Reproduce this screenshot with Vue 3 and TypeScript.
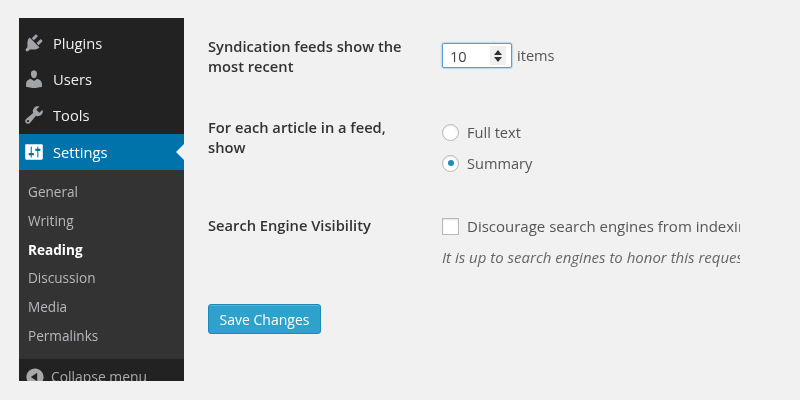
<script setup lang="ts">
const topItems = [
  {
    label: 'Plugins',
    d: 'M13.11 4.36L9.87 7.6 8 5.73l3.24-3.24c.35-.34 1.05-.2 1.56.32.52.51.66 1.21.31 1.55zm-8 1.77l.91-1.12 9.01 9.01-1.19.84c-.71.71-2.63 1.16-3.82 1.16H6.14L4.9 17.26c-.59.59-1.54.59-2.12 0-.59-.58-.59-1.53 0-2.12l1.24-1.24v-3.88c0-1.13.4-3.19 1.09-3.89zm7.26 3.97l3.24-3.24c.34-.35 1.04-.21 1.55.31.52.51.66 1.21.31 1.55l-3.24 3.25z',
  },
  {
    label: 'Users',
    d: 'M10 9.25c-2.27 0-2.73-3.44-2.73-3.44C7 4.02 7.82 2 9.97 2c2.16 0 2.98 2.02 2.71 3.81 0 0-.41 3.44-2.68 3.44zm0 2.57L12.72 10c2.39 0 4.52 2.33 4.52 4.53v2.49s-3.65 1.13-7.24 1.13c-3.65 0-7.24-1.13-7.24-1.13v-2.49c0-2.25 1.94-4.48 4.47-4.48z',
  },
  {
    label: 'Tools',
    d: 'M16.68 9.77c-1.34 1.34-3.3 1.67-4.95.99l-5.41 6.52c-.99.99-2.59.99-3.58 0s-.99-2.59 0-3.57l6.52-5.42c-.68-1.65-.35-3.61.99-4.95 1.28-1.28 3.12-1.62 4.72-1.06l-2.89 2.89 2.82 2.82 2.86-2.87c.53 1.58.18 3.39-1.08 4.65zM3.81 16.21c.4.39 1.04.39 1.43 0 .4-.4.4-1.04 0-1.43-.39-.4-1.03-.4-1.43 0-.39.39-.39 1.03 0 1.43z',
  },
];
const subItems = ['General', 'Writing', 'Reading', 'Discussion', 'Media', 'Permalinks'];
</script>

<template>
  <div class="page">
    <aside class="sidebar">
      <nav class="menu">
        <div v-for="item in topItems" :key="item.label" class="menu-item">
          <svg class="icon" viewBox="0 0 20 20" aria-hidden="true"><path :d="item.d" /></svg>
          <span>{{ item.label }}</span>
        </div>
        <div class="menu-item current">
          <svg class="icon" viewBox="0 0 20 20" aria-hidden="true">
            <path d="M18 16V4c0-.55-.45-1-1-1H3c-.55 0-1 .45-1 1v12c0 .55.45 1 1 1h14c.55 0 1-.45 1-1zM8 11h1c.55 0 1 .45 1 1s-.45 1-1 1H8v1.5c0 .28-.22.5-.5.5s-.5-.22-.5-.5V13H6c-.55 0-1-.45-1-1s.45-1 1-1h1V5.5c0-.28.22-.5.5-.5s.5.22.5.5V11zm5-2h-1c-.55 0-1-.45-1-1s.45-1 1-1h1V5.5c0-.28.22-.5.5-.5s.5.22.5.5V7h1c.55 0 1 .45 1 1s-.45 1-1 1h-1v5.5c0 .28-.22.5-.5.5s-.5-.22-.5-.5V9z" />
          </svg>
          <span>Settings</span>
          <i class="arrow"></i>
        </div>
      </nav>
      <ul class="submenu">
        <li v-for="s in subItems" :key="s" :class="{ active: s === 'Reading' }">{{ s }}</li>
      </ul>
      <div class="collapse">
        <svg class="collapse-icon" viewBox="0 0 20 20" aria-hidden="true">
          <path d="M10 2.16c4.33 0 7.84 3.51 7.84 7.84s-3.51 7.84-7.84 7.84S2.16 14.33 2.16 10 5.71 2.16 10 2.16zm2 11.72V6.12L6.18 9.97z" />
        </svg>
        <span>Collapse menu</span>
      </div>
    </aside>

    <main class="main">
      <section class="row row-feeds">
        <div class="label">Syndication feeds show the most recent</div>
        <div class="field inline">
          <div class="number">
            <span>10</span>
            <span class="spin-box">
              <svg class="spin" viewBox="0 0 12 16" aria-hidden="true">
                <path fill="#333" d="M6 2l4 5H2zM6 14l-4-5h8z" />
              </svg>
            </span>
          </div>
          <span class="text">items</span>
        </div>
      </section>

      <section class="row row-show">
        <div class="label">For each article in a feed, show</div>
        <div class="field stack">
          <div class="option"><i class="radio"></i><span class="text">Full text</span></div>
          <div class="option"><i class="radio on"></i><span class="text">Summary</span></div>
        </div>
      </section>

      <section class="row row-search">
        <div class="label">Search Engine Visibility</div>
        <div class="field clip">
          <div class="option"><i class="check"></i><span class="text nowrap wide">Discourage search engines from indexing this site</span></div>
          <p class="hint">It is up to search engines to honor this request.</p>
        </div>
      </section>

      <button class="save" type="button">Save Changes</button>
    </main>
  </div>
</template>

<style>
html, body { margin: 0; background: #f1f1f1; }
</style>

<style scoped>
.page {
  width: 800px;
  height: 400px;
  box-sizing: border-box;
  padding: 18px 0 0 19px;
  display: flex;
  overflow: hidden;
  background: #f1f1f1;
  font-family: "Open Sans", "Liberation Sans", sans-serif;
  font-size: 14.6px;
  color: #444;
  filter: blur(.45px);
}
.sidebar {
  width: 165px;
  height: 363px;
  flex: none;
  display: flex;
  flex-direction: column;
  overflow: hidden;
  background: #222;
}
.menu { padding-top: 7px; flex: none; }
.menu-item {
  height: 36px;
  display: flex;
  align-items: center;
  color: #eee;
  font-size: 14.7px;
  position: relative;
}
.menu-item span { margin-left: 8px; }
.icon { width: 22px; height: 22px; margin-left: 4px; fill: #a0a5aa; flex: none; }
.current { background: #0073aa; color: #fff; margin-top: 1px; }
.current .icon { fill: #fff; }
.arrow {
  position: absolute;
  right: 0;
  top: 10px;
  border: 8px solid transparent;
  border-left: 0;
  border-right-color: #f1f1f1;
}
.submenu {
  list-style: none;
  margin: 0;
  padding: 8px 0 0;
  height: 189px;
  flex: none;
  box-sizing: border-box;
  background: #333;
  color: #b4b9be;
  font-size: 13.6px;
}
.submenu li { height: 28.8px; line-height: 28.8px; padding-left: 9px; }
.submenu .active { color: #fff; font-weight: 700; }
.collapse {
  flex: 1;
  min-height: 0;
  display: flex;
  align-items: flex-start;
  padding: 8px 0 0 5px;
  color: #aaa;
  font-size: 13.9px;
  line-height: 20px;
}
.collapse-icon { width: 22px; height: 22px; flex: none; margin: -1px 5px 0 0; fill: #a8a8a8; }
.main {
  width: 556px;
  flex: none;
  box-sizing: border-box;
  padding: 18px 0 0 24px;
}
.row { display: flex; }
.row-feeds { height: 81px; }
.row-show { height: 98px; }
.row-search { height: 89px; }
.label {
  width: 200px;
  margin-right: 34px;
  flex: none;
  font-weight: 600;
  font-size: 14.7px;
  line-height: 20px;
  color: #333;
}
.field { min-width: 0; flex: 1; }
.inline { display: flex; align-items: flex-start; padding-top: 7px; }
.number {
  width: 70px;
  height: 25px;
  display: flex;
  align-items: center;
  justify-content: space-between;
  box-sizing: border-box;
  padding: 0 5px 0 7px;
  background: #fff;
  border: 1px solid #5b9dd9;
  border-radius: 2px;
  box-shadow: 0 0 2px rgba(30, 140, 190, .8);
  color: #444;
}
.spin-box {
  width: 16px;
  height: 19px;
  display: flex;
  align-items: center;
  justify-content: center;
  background: #f0f0f0;
}
.spin { width: 12px; height: 16px; }
.inline .text { margin-left: 5px; line-height: 25px; }
.stack { display: flex; flex-direction: column; gap: 11px; padding-top: 5px; }
.option { display: flex; align-items: center; height: 20px; }
.text { color: #555; }
.wide { font-size: 15px; }
.nowrap { white-space: nowrap; }
.radio, .check {
  width: 17px;
  height: 17px;
  flex: none;
  box-sizing: border-box;
  margin-right: 8px;
  background: #fff;
  border: 1px solid #b4b9be;
  box-shadow: inset 0 1px 2px rgba(0, 0, 0, .1);
}
.radio { border-radius: 50%; display: flex; align-items: center; justify-content: center; }
.radio.on::before {
  content: "";
  width: 6px;
  height: 6px;
  border-radius: 50%;
  background: #1e8cbe;
}
.clip { overflow: hidden; padding-top: 1px; }
.hint {
  margin: 11px 0 0;
  font-style: italic;
  font-size: 15px;
  line-height: 20px;
  color: #666;
  white-space: nowrap;
}
.save {
  width: 113px;
  height: 30px;
  display: block;
  padding: 0;
  background: #2ea2cc;
  border: 1px solid #1b8ab5;
  border-radius: 3px;
  box-shadow: inset 0 1px 0 rgba(120, 200, 230, .5);
  color: #fff;
  font: 14px "Open Sans", "Liberation Sans", sans-serif;
}
</style>
